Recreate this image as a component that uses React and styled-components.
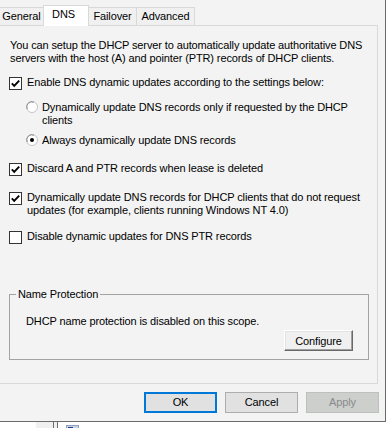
import React from "react";
import styled, { createGlobalStyle } from "styled-components";

const Global = createGlobalStyle`
  html, body { margin: 0; padding: 0; overflow: hidden; background: #ffffff; }
  body {
    font-family: "Liberation Sans", Arial, sans-serif;
    font-size: 11px;
    letter-spacing: -0.12px;
    color: #000000;
  }
  #root { width: 388px; height: 428px; }
`;

const Page = styled.div`
  width: 388px;
  height: 428px;
  display: flex;
  flex-direction: column;
  background: #ffffff;
  overflow: hidden;
`;

const Window = styled.div`
  flex: none;
  width: 386px;
  height: 422px;
  box-sizing: border-box;
  background: #f3f3f3;
  border-right: 1px solid #6b6b6b;
  border-bottom: 1px solid #6b6b6b;
  padding-right: 7px;
  display: flex;
  flex-direction: column;
`;

const TabStrip = styled.div`
  height: 25px;
  display: flex;
  align-items: flex-end;
  flex: none;
`;

const Tab = styled.div`
  box-sizing: border-box;
  width: ${(p) => p.$w}px;
  height: ${(p) => (p.$active ? 21 : 18)}px;
  margin-left: -1px;
  margin-bottom: ${(p) => (p.$active ? -1 : 0)}px;
  border: 1px solid #d9d9d9;
  border-bottom: none;
  background: ${(p) => (p.$active ? "#ffffff" : "#f0f0f0")};
  padding-top: 2px;
  padding-right: ${(p) => (p.$active ? 5 : 0)}px;
  line-height: 13px;
  text-align: center;
  white-space: nowrap;
  position: relative;
  z-index: ${(p) => (p.$active ? 1 : 0)};
`;

const Panel = styled.div`
  flex: none;
  box-sizing: border-box;
  width: 378px;
  height: 359px;
  border: 1px solid #d9d9d9;
  border-left: none;
  background: #f3f3f3;
  padding: 13px 0 0 9px;
  display: flex;
  flex-direction: column;
  align-items: flex-start;
`;

const Intro = styled.p`
  margin: 0 0 0 1px;
  line-height: 13px;
  white-space: nowrap;
`;

const Option = styled.div`
  display: flex;
  align-items: flex-start;
  gap: ${(p) => (p.$radio ? 4 : 5)}px;
  margin-top: ${(p) => p.$mt}px;
  margin-left: ${(p) => (p.$radio ? 17 : 0)}px;
`;

const OptionText = styled.span`
  line-height: 13px;
  white-space: nowrap;
`;

const BoxSvg = styled.svg`
  flex: none;
  display: block;
  margin-top: 1px;
`;

const RadioSvg = styled.svg`
  flex: none;
  display: block;
`;

const Group = styled.fieldset`
  margin: 44px 0 0 0;
  width: 360px;
  min-width: 0;
  box-sizing: border-box;
  border: 1px solid #a3a3a3;
  padding: 14px 15px 8px 16px;
  display: flex;
  flex-direction: column;
`;

const Legend = styled.legend`
  margin-left: -10px;
  padding: 0 2px;
  line-height: 13px;
`;

const GroupText = styled.div`
  line-height: 13px;
  white-space: nowrap;
`;

const GroupActions = styled.div`
  display: flex;
  justify-content: flex-end;
  margin-top: 2px;
`;

const ClassicButton = styled.button`
  width: 69px;
  height: 21px;
  box-sizing: border-box;
  padding: 0;
  margin: 0;
  font: inherit;
  letter-spacing: inherit;
  color: #000;
  background: #f0f0f0;
  border: 1px solid;
  border-color: #ffffff #696969 #696969 #ffffff;
  box-shadow: inset -1px -1px 0 #a0a0a0, inset 1px 1px 0 #e3e3e3;
`;

const ButtonRow = styled.div`
  display: flex;
  justify-content: flex-end;
  gap: 8px;
  margin-top: 8px;
  margin-right: -1px;
`;

const DialogButton = styled.button`
  width: 73px;
  height: 21px;
  box-sizing: border-box;
  margin: 0;
  padding: 0;
  font: inherit;
  letter-spacing: inherit;
  line-height: 13px;
  background: ${(p) => (p.disabled ? "#cccfcc" : "#e1e1e1")};
  color: ${(p) => (p.disabled ? "#8a8a8a" : "#000000")};
  border: ${(p) =>
    p.$default ? "2px solid #0078d7" : p.disabled ? "1px solid #bfbfbf" : "1px solid #adadad"};
`;

const Underlay = styled.div`
  flex: none;
  height: 6px;
  display: flex;
  background: #ffffff;
`;

const UnderCell = styled.div`
  flex: none;
  width: ${(p) => p.$w}px;
  background: ${(p) => p.$bg};
`;

const UnderIcon = styled.svg`
  flex: none;
  display: block;
  margin-top: 3px;
`;

function Check({ checked }) {
  return (
    <BoxSvg width="13" height="13" viewBox="0 0 13 13">
      <rect x="0.5" y="0.5" width="12" height="12" fill="#ffffff" stroke="#333333" />
      {checked && (
        <path d="M2.8 6.4 L5.2 8.8 L10.2 3.6" fill="none" stroke="#000000" strokeWidth="1.9" />
      )}
    </BoxSvg>
  );
}

function Radio({ checked }) {
  return (
    <RadioSvg width="12" height="12" viewBox="0 0 12 12">
      <circle cx="6" cy="6" r="5.5" fill="#ffffff" stroke="#c4c4c4" />
      <path d="M1.3 8 A5 5 0 0 1 8 1.3" fill="none" stroke="#8c8c8c" strokeWidth="1" />
      {checked && <circle cx="6" cy="6" r="2" fill="#000000" />}
    </RadioSvg>
  );
}

export default function App() {
  return (
    <Page>
      <Global />
      <Window>
        <TabStrip>
          <Tab $w={45}>General</Tab>
          <Tab $w={46} $active>DNS</Tab>
          <Tab $w={49}>Failover</Tab>
          <Tab $w={59}>Advanced</Tab>
        </TabStrip>
        <Panel>
          <Intro>
            You can setup the DHCP server to automatically update authoritative DNS
            <br />
            servers with the host (A) and pointer (PTR) records of DHCP clients.
          </Intro>
          <Option $mt={11}>
            <Check checked />
            <OptionText>Enable DNS dynamic updates according to the settings below:</OptionText>
          </Option>
          <Option $mt={11} $radio>
            <Radio />
            <OptionText>
              Dynamically update DNS records only if requested by the DHCP
              <br />
              clients
            </OptionText>
          </Option>
          <Option $mt={7} $radio>
            <Radio checked />
            <OptionText>Always dynamically update DNS records</OptionText>
          </Option>
          <Option $mt={15}>
            <Check checked />
            <OptionText>Discard A and PTR records when lease is deleted</OptionText>
          </Option>
          <Option $mt={15}>
            <Check checked />
            <OptionText>
              Dynamically update DNS records for DHCP clients that do not request
              <br />
              updates (for example, clients running Windows NT 4.0)
            </OptionText>
          </Option>
          <Option $mt={13}>
            <Check />
            <OptionText>Disable dynamic updates for DNS PTR records</OptionText>
          </Option>
          <Group>
            <Legend>Name Protection</Legend>
            <GroupText>DHCP name protection is disabled on this scope.</GroupText>
            <GroupActions>
              <ClassicButton type="button">Configure</ClassicButton>
            </GroupActions>
          </Group>
        </Panel>
        <ButtonRow>
          <DialogButton type="button" $default>OK</DialogButton>
          <DialogButton type="button">Cancel</DialogButton>
          <DialogButton type="button" disabled>Apply</DialogButton>
        </ButtonRow>
      </Window>
      <Underlay>
        <UnderCell $w={36} $bg="#ffffff" />
        <UnderCell $w={17} $bg="#f0f0f0" />
        <UnderCell $w={1} $bg="#6e6e6e" />
        <UnderCell $w={3} $bg="#f0f0f0" />
        <UnderCell $w={1} $bg="#6e6e6e" />
        <UnderCell $w={8} $bg="#ffffff" />
        <UnderIcon width="13" height="3" viewBox="0 0 13 3">
          <rect x="0.5" y="0.5" width="12" height="3" fill="#c9d3e2" stroke="#8ea2c0" />
          <rect x="2" y="2" width="5" height="1" fill="#1c3a9e" />
        </UnderIcon>
      </Underlay>
    </Page>
  );
}
